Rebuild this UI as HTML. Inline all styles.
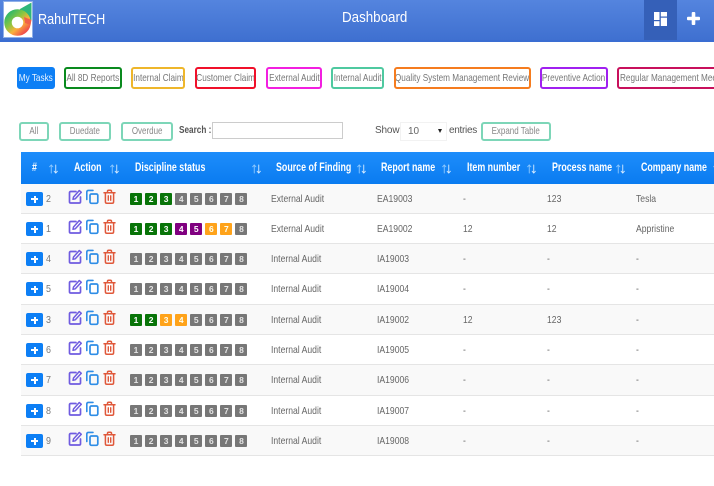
<!DOCTYPE html>
<html><head><meta charset="utf-8"><title>Dashboard</title>
<style>
html,body{margin:0;padding:0;background:#fff}
body{width:714px;height:486px;position:relative;overflow:hidden;font-family:"Liberation Sans",sans-serif;color:#666;filter:blur(.25px)}
.t{position:absolute;white-space:nowrap}
.hd{position:absolute;left:0;top:0;width:714px;height:40px;background:linear-gradient(#5484de,#3f70d0);border-bottom:2px solid #3a6dd2}
.tab{position:absolute;top:67px;height:18px;border:2px solid;border-radius:3px;font-size:10.5px;line-height:18px;color:#777;white-space:nowrap;overflow:hidden;background:#fff;display:flex;justify-content:center}
.tab span{display:block;flex:none;transform:scaleX(.78)}
.f{position:absolute;top:122px;height:15px;border:2px solid #7dd6b8;border-radius:3px;font-size:10.5px;line-height:15px;color:#888;background:#fff;display:flex;justify-content:center;white-space:nowrap}
.f span{display:block;flex:none;transform:scaleX(.76)}
.lb{position:absolute;top:125px;font-size:10px;line-height:12px;letter-spacing:-.15px;color:#555;white-space:nowrap}
.th{position:absolute;left:21px;top:152px;width:693px;height:32px;background:linear-gradient(#1d8dfb,#0a7bf0)}
.h{position:absolute;top:9.5px;font-size:11.5px;line-height:13px;font-weight:bold;color:#fff;white-space:nowrap;transform:scaleX(.77);transform-origin:0 50%}
.a{position:absolute;top:11.500px}
.r{position:absolute;left:21px;width:693px;height:29px;border-bottom:1px solid #e5e5e5;background:#fff}
.s{background:#f9f9f9}
.pb{position:absolute;left:5px;top:8px;width:17px;height:14px;background:#0d7ff5;border-radius:2px}
.pb:before{content:"";position:absolute;left:5px;top:6px;width:7px;height:2px;background:#fff}
.pb:after{content:"";position:absolute;left:7.500px;top:3.500px;width:2px;height:7px;background:#fff}
.n{position:absolute;left:25px;top:8.500px;font-size:10.500px;line-height:12px;color:#777;transform:scaleX(.85);transform-origin:0 50%}
.ic{position:absolute;left:47px;top:5px}
.bs{position:absolute;left:109px;top:9px;display:flex;gap:3.07px}
.bs b{display:block;width:12px;height:12px;background:#777;color:#e4e4e4;font-size:8.500px;line-height:12px;text-align:center;border-radius:1px}
.bs .g{background:#087408;color:#fff}.bs .p{background:#800080;color:#fff}.bs .o{background:#ffa31a;color:#ffe}
.c{position:absolute;top:8.500px;font-size:10.500px;line-height:12px;color:#666;white-space:nowrap;transform:scaleX(.82);transform-origin:0 50%}
.c1{left:250px}.c2{left:356px}.c3{left:442px}.c4{left:526px}.c5{left:615px}
</style></head>
<body>
<svg width="0" height="0" style="position:absolute">
<defs>
<linearGradient id="lg" x1="0" y1="0" x2=".9" y2="1"><stop offset="0" stop-color="#2db76a"/><stop offset=".4" stop-color="#8cc63f"/><stop offset=".68" stop-color="#fbb03b"/><stop offset="1" stop-color="#f0504a"/></linearGradient>
<symbol id="ic" viewBox="0 0 50 16">
<g fill="none" stroke-linecap="round" stroke-linejoin="round">
<path d="M8 2.500H2.800Q1.500 2.500 1.500 3.800V12.700Q1.500 14 2.800 14H11.200Q12.500 14 12.500 12.700V8" stroke="#6f5be0" stroke-width="1.700"/>
<path d="M5.500 8L11.300 1.500L13.300 3.300L7.300 9.800L5 10.300Z" stroke="#6f5be0" stroke-width="1.500"/>
<path d="M18.800 10.500V3Q18.800 1.400 20.400 1.400H25" stroke="#2e8de6" stroke-width="1.600"/>
<rect x="22" y="5" width="7.800" height="9.300" rx="1.400" stroke="#2e8de6" stroke-width="1.700"/>
<path d="M36 3.800H47M39.500 3.800V2.300Q39.500 1.200 40.600 1.200H42.400Q43.500 1.200 43.500 2.300V3.800M37.400 3.800V12.700Q37.400 14.200 38.900 14.200H44.100Q45.600 14.200 45.600 12.700V3.800" stroke="#e0583a" stroke-width="1.500"/>
<path d="M40.300 6.800V11.300M42.700 6.800V11.300" stroke="#e0583a" stroke-width="1.400"/>
</g>
</symbol>
<symbol id="ar" viewBox="0 0 10 11">
<g fill="none" stroke-width="1" stroke-linecap="round">
<path d="M2.500 10V1M.7 3L2.500 1L4.300 3" stroke="#8cc8ff"/>
<path d="M7.500 1V10M5.700 8L7.500 10L9.300 8" stroke="#d6ebff"/>
</g>
</symbol>
</defs>
</svg>

<div class="hd"></div>
<div class="t" style="left:644px;top:0;width:33px;height:40px;background:#3560b8"></div>
<svg class="t" style="left:3px;top:1px" width="30" height="37" viewBox="0 0 30 37">
<rect x=".5" y=".5" width="29" height="36" fill="#fff" stroke="#8fb0e8"/>
<path d="M17 8L28.500 1.500V19H22V13L17 13Z" fill="#2fb77a"/>
<circle cx="14.500" cy="21.500" r="9.500" fill="none" stroke="url(#lg)" stroke-width="7.500"/>
<path d="M21 16L28.500 19L27.500 24L22 22Z" fill="#f0604a"/>
</svg>
<div class="t" style="left:38px;top:10.500px;font-size:15px;line-height:18px;color:#fff;transform:scaleX(.84);transform-origin:0 50%">RahulTECH</div>
<div class="t" style="left:342px;top:8.500px;font-size:15px;line-height:18px;color:#fff;transform:scaleX(.89);transform-origin:0 50%">Dashboard</div>
<svg class="t" style="left:654px;top:12px" width="13" height="14" viewBox="0 0 13 14" fill="#fff"><rect x="0" y="0" width="5.500" height="8"/><rect x="6.800" y="0" width="6.200" height="4.500"/><rect x="0" y="9.200" width="5.500" height="4.800"/><rect x="6.800" y="5.700" width="6.200" height="8.300"/></svg>
<svg class="t" style="left:687px;top:12px" width="13" height="13" viewBox="0 0 13 13" fill="#fff"><rect x="4.700" y="0" width="3.600" height="13" rx="1"/><rect x="0" y="4.700" width="13" height="3.600" rx="1"/></svg>

<div class="tab" style="left:17px;width:34px;background:#0d7ff5;border-color:#0d7ff5;color:#e8f3ff"><span>My Tasks</span></div>
<div class="tab" style="left:64px;width:54px;border-color:#0a8a1e"><span>All 8D Reports</span></div>
<div class="tab" style="left:131px;width:50px;border-color:#eeb62b"><span>Internal Claim</span></div>
<div class="tab" style="left:195px;width:57px;border-color:#f0102a"><span>Customer Claim</span></div>
<div class="tab" style="left:266px;width:52px;border-color:#f21fe0"><span>External Audit</span></div>
<div class="tab" style="left:331px;width:49px;border-color:#4fc9a0"><span>Internal Audit</span></div>
<div class="tab" style="left:394px;width:133px;border-color:#f57c1f"><span>Quality System Management Review</span></div>
<div class="tab" style="left:540px;width:64px;border-color:#a020f0"><span>Preventive Action</span></div>
<div class="tab" style="left:617px;width:120px;border-color:#c8105c;justify-content:flex-start"><span style="transform-origin:0 50%;margin-left:1px">Regular Management Meeting</span></div>

<div class="f" style="left:19px;width:26px"><span>All</span></div>
<div class="f" style="left:59px;width:48px"><span>Duedate</span></div>
<div class="f" style="left:121px;width:48px"><span>Overdue</span></div>
<div class="lb" style="left:179px;font-weight:bold;letter-spacing:0;transform:scaleX(.82);transform-origin:0 50%">Search :</div>
<div class="t" style="left:212px;top:122px;width:129px;height:15px;border:1.500px solid #ccc;background:#fff"></div>
<div class="lb" style="left:375px">Show</div>
<div class="t" style="left:400px;top:122px;width:45px;height:17px;border:1px solid #f2f2f2;background:#fff;font-size:10px;line-height:17px;color:#666;text-indent:7px">10</div>
<div class="t" style="left:438px;top:129px;width:0;height:0;border:2.500px solid transparent;border-top:4px solid #222;border-bottom:0"></div>
<div class="lb" style="left:449px;letter-spacing:-.3px">entries</div>
<div class="f" style="left:481px;width:66px"><span>Expand Table</span></div>

<div class="th">
<span class="h" style="left:11px">#</span><svg class="a" style="left:28px" width="9" height="10"><use href="#ar"/></svg>
<span class="h" style="left:53px">Action</span><svg class="a" style="left:89px" width="9" height="10"><use href="#ar"/></svg>
<span class="h" style="left:114px">Discipline status</span><svg class="a" style="left:231px" width="9" height="10"><use href="#ar"/></svg>
<span class="h" style="left:255px">Source of Finding</span><svg class="a" style="left:336px" width="9" height="10"><use href="#ar"/></svg>
<span class="h" style="left:360px">Report name</span><svg class="a" style="left:421px" width="9" height="10"><use href="#ar"/></svg>
<span class="h" style="left:446px">Item number</span><svg class="a" style="left:506px" width="9" height="10"><use href="#ar"/></svg>
<span class="h" style="left:531px">Process name</span><svg class="a" style="left:595px" width="9" height="10"><use href="#ar"/></svg>
<span class="h" style="left:620px">Company name</span><svg class="a" style="left:692px" width="9" height="10"><use href="#ar"/></svg>
</div>

<div class="r s" style="top:184px"><span class="pb"></span><span class="n">2</span><svg class="ic" width="50" height="16"><use href="#ic"/></svg>
<div class="bs"><b class="g">1</b><b class="g">2</b><b class="g">3</b><b>4</b><b>5</b><b>6</b><b>7</b><b>8</b></div>
<span class="c c1">External Audit</span><span class="c c2">EA19003</span><span class="c c3">-</span><span class="c c4">123</span><span class="c c5">Tesla</span></div>

<div class="r" style="top:214px"><span class="pb"></span><span class="n">1</span><svg class="ic" width="50" height="16"><use href="#ic"/></svg>
<div class="bs"><b class="g">1</b><b class="g">2</b><b class="g">3</b><b class="p">4</b><b class="p">5</b><b class="o">6</b><b class="o">7</b><b>8</b></div>
<span class="c c1">External Audit</span><span class="c c2">EA19002</span><span class="c c3">12</span><span class="c c4">12</span><span class="c c5">Appristine</span></div>

<div class="r s" style="top:244px"><span class="pb"></span><span class="n">4</span><svg class="ic" width="50" height="16"><use href="#ic"/></svg>
<div class="bs"><b>1</b><b>2</b><b>3</b><b>4</b><b>5</b><b>6</b><b>7</b><b>8</b></div>
<span class="c c1">Internal Audit</span><span class="c c2">IA19003</span><span class="c c3">-</span><span class="c c4">-</span><span class="c c5">-</span></div>

<div class="r" style="top:274px;height:30px"><span class="pb"></span><span class="n">5</span><svg class="ic" width="50" height="16"><use href="#ic"/></svg>
<div class="bs"><b>1</b><b>2</b><b>3</b><b>4</b><b>5</b><b>6</b><b>7</b><b>8</b></div>
<span class="c c1">Internal Audit</span><span class="c c2">IA19004</span><span class="c c3">-</span><span class="c c4">-</span><span class="c c5">-</span></div>

<div class="r s" style="top:305px"><span class="pb"></span><span class="n">3</span><svg class="ic" width="50" height="16"><use href="#ic"/></svg>
<div class="bs"><b class="g">1</b><b class="g">2</b><b class="o">3</b><b class="o">4</b><b>5</b><b>6</b><b>7</b><b>8</b></div>
<span class="c c1">Internal Audit</span><span class="c c2">IA19002</span><span class="c c3">12</span><span class="c c4">123</span><span class="c c5">-</span></div>

<div class="r" style="top:335px"><span class="pb"></span><span class="n">6</span><svg class="ic" width="50" height="16"><use href="#ic"/></svg>
<div class="bs"><b>1</b><b>2</b><b>3</b><b>4</b><b>5</b><b>6</b><b>7</b><b>8</b></div>
<span class="c c1">Internal Audit</span><span class="c c2">IA19005</span><span class="c c3">-</span><span class="c c4">-</span><span class="c c5">-</span></div>

<div class="r s" style="top:365px;height:30px"><span class="pb"></span><span class="n">7</span><svg class="ic" width="50" height="16"><use href="#ic"/></svg>
<div class="bs"><b>1</b><b>2</b><b>3</b><b>4</b><b>5</b><b>6</b><b>7</b><b>8</b></div>
<span class="c c1">Internal Audit</span><span class="c c2">IA19006</span><span class="c c3">-</span><span class="c c4">-</span><span class="c c5">-</span></div>

<div class="r" style="top:396px"><span class="pb"></span><span class="n">8</span><svg class="ic" width="50" height="16"><use href="#ic"/></svg>
<div class="bs"><b>1</b><b>2</b><b>3</b><b>4</b><b>5</b><b>6</b><b>7</b><b>8</b></div>
<span class="c c1">Internal Audit</span><span class="c c2">IA19007</span><span class="c c3">-</span><span class="c c4">-</span><span class="c c5">-</span></div>

<div class="r s" style="top:426px"><span class="pb"></span><span class="n">9</span><svg class="ic" width="50" height="16"><use href="#ic"/></svg>
<div class="bs"><b>1</b><b>2</b><b>3</b><b>4</b><b>5</b><b>6</b><b>7</b><b>8</b></div>
<span class="c c1">Internal Audit</span><span class="c c2">IA19008</span><span class="c c3">-</span><span class="c c4">-</span><span class="c c5">-</span></div>
</body></html>
